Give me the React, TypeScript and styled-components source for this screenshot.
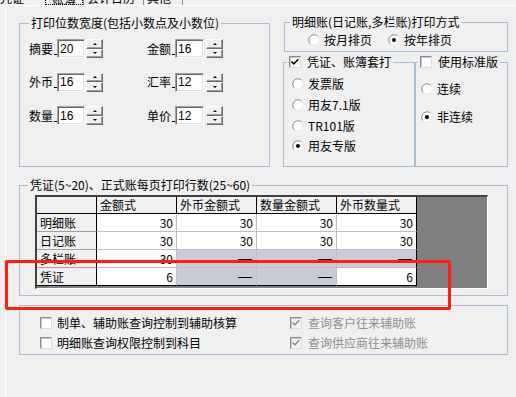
import React from 'react';
import styled, { createGlobalStyle } from 'styled-components';

const GlobalStyle = createGlobalStyle`
  html, body { margin: 0; padding: 0; background: #f0f0f0; }
  body {
    font-family: "Noto Sans CJK SC", "Liberation Sans", sans-serif;
    font-size: 12px;
    color: #000;
  }
`;

const FRAME = '#a8bdd9';

const Window = styled.div`
  position: relative;
  width: 516px;
  height: 397px;
  overflow: hidden;
  background: #f0f0f0;
`;

/* ---------- tabs ---------- */
const TabStrip = styled.div`
  display: flex;
  align-items: flex-end;
  height: 5px;
  overflow: hidden;
  white-space: nowrap;
`;

const Tab = styled.div<{ $w: number; $pad: number; $sep?: boolean }>`
  flex: none;
  box-sizing: border-box;
  width: ${p => p.$w}px;
  height: 14px;
  line-height: 14px;
  padding-left: ${p => p.$pad}px;
  border-right: ${p => (p.$sep ? '1px solid #8a8a8a' : 'none')};
`;

const FocusLabel = styled.span`
  display: inline-block;
  box-sizing: border-box;
  height: 14px;
  padding: 0 6px;
  border: 1px dotted #000;
`;

const TabPage = styled.div`
  box-sizing: border-box;
  margin-left: 5px;
  height: 392px;
  border-left: 1px solid #fff;
  border-top: 1px solid #fff;
  padding: 10px 0 0 13px;
`;

/* ---------- group boxes ---------- */
const GroupBox = styled.fieldset`
  box-sizing: border-box;
  margin: 0;
  padding: 0;
  min-width: 0;
  border: 1px solid ${FRAME};
`;

const Legend = styled.legend<{ $offset: number }>`
  margin-left: ${p => p.$offset}px;
  padding: 0 2px;
  height: 14px;
  line-height: 14px;
  white-space: nowrap;
  display: flex;
  align-items: center;
  gap: 6px;
`;

const TopRow = styled.div`
  display: flex;
  align-items: flex-start;
`;

const WidthGroup = styled(GroupBox)`
  width: 251px;
  height: 151px;
  flex: none;
`;

const RightColumn = styled.div`
  margin-left: 13px;
  margin-top: -1px;
  width: 225px;
  display: flex;
  flex-direction: column;
`;

const ModeGroup = styled(GroupBox)`
  margin-left: 1px;
  width: 224px;
  height: 37px;
`;

const PrintRow = styled.div`
  display: flex;
  margin-top: 3px;
`;

const SetGroup = styled(GroupBox)`
  width: 132px;
  height: 112px;
`;

const StdGroup = styled(GroupBox)`
  width: 93px;
  height: 112px;
`;

const LinesGroup = styled(GroupBox)`
  margin-top: 11px;
  width: 489px;
  height: 118px;
`;

const OptionGroup = styled(GroupBox)`
  margin-top: 9px;
  width: 489px;
  height: 50px;
`;

/* ---------- width fields ---------- */
const FieldGrid = styled.div`
  display: grid;
  grid-template-columns: 74px 76px;
  grid-auto-rows: 19px;
  column-gap: 44px;
  row-gap: 14.5px;
  padding: 9px 0 0 9px;
`;

const Field = styled.div`
  display: flex;
  align-items: center;
  height: 19px;
`;

const FieldLabel = styled.span`
  position: relative;
  width: 28px;
  flex: none;
  line-height: 14px;
  white-space: nowrap;
  &::after {
    content: '';
    position: absolute;
    right: 0;
    bottom: 1px;
    width: 3px;
    height: 1px;
    background: #000;
  }
`;

const NumBox = styled.input<{ $w: number }>`
  box-sizing: border-box;
  width: ${p => p.$w}px;
  height: 19px;
  margin: 0;
  padding: 0 0 0 2px;
  background: #fff;
  border: 1px solid;
  border-color: #a0a0a0 #fff #fff #a0a0a0;
  box-shadow: inset 1px 1px 0 #696969, inset -1px -1px 0 #e3e3e3;
  font-family: "Liberation Sans", sans-serif;
  font-size: 12px;
  color: #000;
  outline: none;
`;

const Spinner = styled.div<{ $gap: number }>`
  display: flex;
  flex-direction: column;
  margin-left: ${p => p.$gap}px;
  width: 17px;
  height: 19px;
`;

const SpinButton = styled.div<{ $dir: 'up' | 'down' }>`
  flex: 1;
  box-sizing: border-box;
  display: flex;
  align-items: center;
  justify-content: center;
  background: #f0f0f0;
  border: 1px solid;
  border-color: #fff #696969 #696969 #fff;
  box-shadow: inset -1px -1px 0 #a0a0a0;
  &::before {
    content: '';
    width: 0;
    height: 0;
    border-left: 2px solid transparent;
    border-right: 2px solid transparent;
    ${p => (p.$dir === 'up' ? 'border-bottom: 2px solid #000;' : 'border-top: 2px solid #000;')}
  }
`;

/* ---------- radios / checks ---------- */
const ChoiceItem = styled.label<{ $disabled?: boolean; $gap?: number }>`
  display: flex;
  align-items: center;
  gap: ${p => p.$gap ?? 4}px;
  white-space: nowrap;
  line-height: 14px;
  color: ${p => (p.$disabled ? '#8f8f8f' : '#000')};
`;

const RadioRow = styled.div`
  display: flex;
  gap: 16px;
  padding: 4px 0 0 23px;
  height: 14px;
`;

const RadioList = styled.div<{ $padTop: number; $padLeft: number; $gap: number; $row: number }>`
  display: flex;
  flex-direction: column;
  gap: ${p => p.$gap}px;
  padding: ${p => p.$padTop}px 0 0 ${p => p.$padLeft}px;
  & > * {
    height: ${p => p.$row}px;
  }
`;

const RadioSvg = styled.svg`
  flex: none;
  display: block;
`;

function Radio({ checked }: { checked?: boolean }) {
  return (
    <RadioSvg width="12" height="12" viewBox="0 0 12 12">
      <circle cx="6" cy="6" r="5.5" fill="#fff" />
      <path d="M2.3 9.7 A5.2 5.2 0 0 1 9.7 2.3" stroke="#8c8c8c" strokeWidth="1" fill="none" />
      <path d="M9.7 2.3 A5.2 5.2 0 0 1 2.3 9.7" stroke="#e6e6e6" strokeWidth="1" fill="none" />
      {checked && <circle cx="6" cy="6" r="2" fill="#000" />}
    </RadioSvg>
  );
}

const CheckBoxBox = styled.span<{ $disabled?: boolean }>`
  flex: none;
  box-sizing: border-box;
  display: inline-flex;
  align-items: center;
  justify-content: center;
  width: 12px;
  height: 12px;
  background: ${p => (p.$disabled ? '#f4f4f4' : '#fff')};
  border: 1px solid;
  border-color: #8c8c8c #dcdcdc #dcdcdc #8c8c8c;
  box-shadow: inset 1px 1px 0 #c8c8c8;
`;

function CheckBox({ checked, disabled }: { checked?: boolean; disabled?: boolean }) {
  return (
    <CheckBoxBox $disabled={disabled}>
      {checked && (
        <svg width="10" height="10" viewBox="0 0 10 10" style={{ display: 'block' }}>
          <path
            d="M1.5 4.5 L3.8 6.8 L8.3 2.3"
            stroke={disabled ? '#8f8f8f' : '#000'}
            strokeWidth="1.6"
            fill="none"
          />
        </svg>
      )}
    </CheckBoxBox>
  );
}

/* ---------- grid control ---------- */
const GridFrame = styled.div`
  box-sizing: border-box;
  margin: 3px 0 0 15px;
  width: 453px;
  height: 94px;
  background: #808080;
  border-top: 2px solid #404040;
  border-left: 2px solid #404040;
  border-right: 1px solid #fff;
  border-bottom: 1px solid #fff;
`;

const Table = styled.div`
  display: grid;
  grid-template-columns: 60px repeat(4, 80px);
  grid-template-rows: 17px repeat(4, 18px);
  width: 380px;
`;

const HeadCell = styled.div<{ $last?: boolean }>`
  box-sizing: border-box;
  background: #f0f0f0;
  border-right: 1px solid #000;
  border-bottom: 1px solid #000;
  padding-left: 3px;
  line-height: 15px;
  white-space: nowrap;
  overflow: hidden;
`;

const RowHead = styled.div<{ $lastRow?: boolean }>`
  box-sizing: border-box;
  background: #f0f0f0;
  border-right: 1px solid #000;
  border-bottom: 1px solid ${p => (p.$lastRow ? '#000' : '#a0a0a0')};
  padding-left: 3px;
  line-height: 17px;
  white-space: nowrap;
`;

const DataCell = styled.div<{ $off?: boolean; $lastCol?: boolean; $lastRow?: boolean }>`
  box-sizing: border-box;
  display: flex;
  align-items: center;
  justify-content: flex-end;
  padding-right: 3px;
  background: ${p => (p.$off ? '#c9ccd5' : '#fff')};
  border-right: 1px solid ${p => (p.$lastCol ? '#000' : '#c0c0c0')};
  border-bottom: 1px solid ${p => (p.$lastRow ? '#000' : '#c0c0c0')};
  line-height: 17px;
`;

const Dash = styled.span`
  font-family: "Liberation Sans", sans-serif;
  font-size: 14px;
  line-height: 17px;
  padding-right: 1px;
`;

/* ---------- bottom options ---------- */
const OptionGrid = styled.div`
  display: grid;
  grid-template-columns: 250px 200px;
  grid-auto-rows: 20px;
  padding: 7px 0 0 20px;
`;

/* ---------- annotation ---------- */
const Highlight = styled.div`
  position: absolute;
  left: 5px;
  top: 260px;
  width: 446px;
  height: 50px;
  box-sizing: border-box;
  border: 3px solid #ff1e10;
  border-radius: 2px;
  pointer-events: none;
`;

const widthFields: Array<[string, string, 'l' | 'r']> = [
  ['摘要', '20', 'l'],
  ['金额', '16', 'r'],
  ['外币', '16', 'l'],
  ['汇率', '12', 'r'],
  ['数量', '16', 'l'],
  ['单价', '12', 'r'],
];

const columns = ['金额式', '外币金额式', '数量金额式', '外币数量式'];

const rows: Array<{ name: string; cells: Array<number | null> }> = [
  { name: '明细账', cells: [30, 30, 30, 30] },
  { name: '日记账', cells: [30, 30, 30, 30] },
  { name: '多栏账', cells: [30, null, null, null] },
  { name: '凭证', cells: [6, null, null, 6] },
];

export default function App() {
  return (
    <Window>
      <GlobalStyle />
      <TabStrip>
        <Tab $w={43} $pad={0}>凭证</Tab>
        <Tab $w={41} $pad={2} $sep>
          <FocusLabel>账簿</FocusLabel>
        </Tab>
        <Tab $w={60} $pad={3} $sep>会计日历</Tab>
        <Tab $w={39} $pad={3} $sep>其他</Tab>
      </TabStrip>

      <TabPage>
        <TopRow>
          <WidthGroup>
            <Legend $offset={9}>打印位数宽度(包括小数点及小数位)</Legend>
            <FieldGrid>
              {widthFields.map(([label, value, side]) => (
                <Field key={label}>
                  <FieldLabel>{label}</FieldLabel>
                  <NumBox $w={side === 'l' ? 28 : 29} defaultValue={value} readOnly />
                  <Spinner $gap={side === 'l' ? 1 : 2}>
                    <SpinButton $dir="up" />
                    <SpinButton $dir="down" />
                  </Spinner>
                </Field>
              ))}
            </FieldGrid>
          </WidthGroup>

          <RightColumn>
            <ModeGroup>
              <Legend $offset={5}>明细账(日记账,多栏账)打印方式</Legend>
              <RadioRow>
                <ChoiceItem>
                  <Radio />
                  按月排页
                </ChoiceItem>
                <ChoiceItem>
                  <Radio checked />
                  按年排页
                </ChoiceItem>
              </RadioRow>
            </ModeGroup>

            <PrintRow>
              <SetGroup>
                <Legend $offset={3}>
                  <CheckBox checked />
                  凭证、账簿套打
                </Legend>
                <RadioList $padTop={5} $padLeft={8} $gap={0} $row={20.67}>
                  <ChoiceItem><Radio />发票版</ChoiceItem>
                  <ChoiceItem><Radio />用友7.1版</ChoiceItem>
                  <ChoiceItem><Radio />TR101版</ChoiceItem>
                  <ChoiceItem><Radio checked />用友专版</ChoiceItem>
                </RadioList>
              </SetGroup>
              <StdGroup>
                <Legend $offset={2}>
                  <CheckBox />
                  使用标准版
                </Legend>
                <RadioList $padTop={10} $padLeft={5} $gap={8} $row={20}>
                  <ChoiceItem><Radio />连续</ChoiceItem>
                  <ChoiceItem><Radio checked />非连续</ChoiceItem>
                </RadioList>
              </StdGroup>
            </PrintRow>
          </RightColumn>
        </TopRow>

        <LinesGroup>
          <Legend $offset={8}>凭证(5~20)、正式账每页打印行数(25~60)</Legend>
          <GridFrame>
            <Table>
              <HeadCell />
              {columns.map(c => (
                <HeadCell key={c}>{c}</HeadCell>
              ))}
              {rows.map((r, ri) => (
                <React.Fragment key={r.name}>
                  <RowHead $lastRow={ri === rows.length - 1}>{r.name}</RowHead>
                  {r.cells.map((v, ci) => (
                    <DataCell
                      key={ci}
                      $off={v === null}
                      $lastCol={ci === r.cells.length - 1}
                      $lastRow={ri === rows.length - 1}
                    >
                      {v === null ? <Dash>—</Dash> : v}
                    </DataCell>
                  ))}
                </React.Fragment>
              ))}
            </Table>
          </GridFrame>
        </LinesGroup>

        <OptionGroup>
          <OptionGrid>
            <ChoiceItem $gap={5}>
              <CheckBox />
              制单、辅助账查询控制到辅助核算
            </ChoiceItem>
            <ChoiceItem $gap={6} $disabled>
              <CheckBox checked disabled />
              查询客户往来辅助账
            </ChoiceItem>
            <ChoiceItem $gap={5}>
              <CheckBox />
              明细账查询权限控制到科目
            </ChoiceItem>
            <ChoiceItem $gap={6} $disabled>
              <CheckBox checked disabled />
              查询供应商往来辅助账
            </ChoiceItem>
          </OptionGrid>
        </OptionGroup>
      </TabPage>

      <Highlight />
    </Window>
  );
}
